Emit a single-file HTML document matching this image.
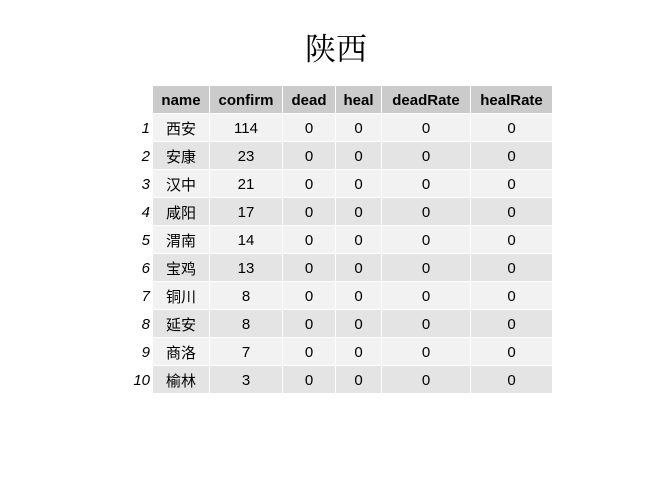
<!DOCTYPE html>
<html><head><meta charset="utf-8"><style>
body{margin:0;width:672px;height:480px;background:#fff;position:relative;overflow:hidden}
h1{position:absolute;top:30px;left:0;width:672px;margin:0;text-align:center;font:normal 31px "Liberation Serif","Noto Serif CJK SC",serif;color:#000;line-height:40px}
table{position:absolute;left:124px;top:85px;border-collapse:separate;border-spacing:1px;table-layout:fixed;font:15px "Liberation Sans","Noto Sans CJK SC",sans-serif;color:#000}
td,th{padding:1px 0 0 0;height:26px;text-align:center;white-space:nowrap;overflow:hidden}
th{background:#cbcbcb;font-weight:bold}
th.i{background:#fff}
td.i{background:#fff!important;text-align:right;font-style:italic;padding-right:2px}
tr.o td{background:#f2f2f2}
tr.e td{background:#e4e4e4}
</style></head><body>
<h1>陕西</h1>
<table>
<colgroup><col style="width:27px"><col style="width:56px"><col style="width:72px"><col style="width:52px"><col style="width:45px"><col style="width:88px"><col style="width:81px"></colgroup>
<tr><th class="i"></th><th>name</th><th>confirm</th><th>dead</th><th>heal</th><th>deadRate</th><th>healRate</th></tr>
<tr class="o"><td class="i">1</td><td>西安</td><td>114</td><td>0</td><td>0</td><td>0</td><td>0</td></tr>
<tr class="e"><td class="i">2</td><td>安康</td><td>23</td><td>0</td><td>0</td><td>0</td><td>0</td></tr>
<tr class="o"><td class="i">3</td><td>汉中</td><td>21</td><td>0</td><td>0</td><td>0</td><td>0</td></tr>
<tr class="e"><td class="i">4</td><td>咸阳</td><td>17</td><td>0</td><td>0</td><td>0</td><td>0</td></tr>
<tr class="o"><td class="i">5</td><td>渭南</td><td>14</td><td>0</td><td>0</td><td>0</td><td>0</td></tr>
<tr class="e"><td class="i">6</td><td>宝鸡</td><td>13</td><td>0</td><td>0</td><td>0</td><td>0</td></tr>
<tr class="o"><td class="i">7</td><td>铜川</td><td>8</td><td>0</td><td>0</td><td>0</td><td>0</td></tr>
<tr class="e"><td class="i">8</td><td>延安</td><td>8</td><td>0</td><td>0</td><td>0</td><td>0</td></tr>
<tr class="o"><td class="i">9</td><td>商洛</td><td>7</td><td>0</td><td>0</td><td>0</td><td>0</td></tr>
<tr class="e"><td class="i">10</td><td>榆林</td><td>3</td><td>0</td><td>0</td><td>0</td><td>0</td></tr>
</table>
</body></html>
